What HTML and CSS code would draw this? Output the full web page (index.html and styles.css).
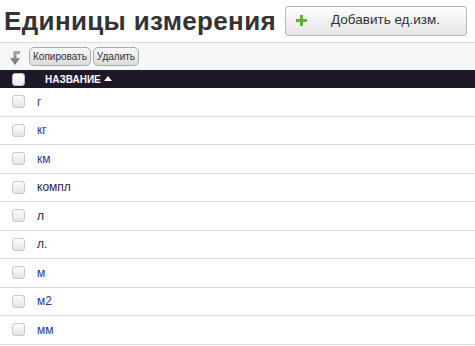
FILE: index.html
```html
<!DOCTYPE html>
<html>
<head>
    <title>Единицы измерения</title>
    <link rel="stylesheet" href="styles.css">
</head>
<body>
    <div class="page-head">
        <h1>Единицы измерения</h1>
        <button class="add-btn">
            <svg class="plus" width="11" height="11" viewBox="0 0 11 11">
                <path d="M4 0h3v4h4v3H7v4H4V7H0V4h4z" fill="#5bb33a"/>
            </svg>
            <span>Добавить ед.изм.</span>
        </button>
    </div>
    <div class="toolbar">
        <svg class="arrow" width="11" height="14" viewBox="0 0 11 14">
            <defs>
                <linearGradient id="ag" x1="0" y1="0" x2="0" y2="1">
                    <stop offset="0" stop-color="#a8a8a8"/>
                    <stop offset="1" stop-color="#6f6f6f"/>
                </linearGradient>
            </defs>
            <path d="M3.5 0H10v3H6.5v4H10L5 14 0 7h3.5z" fill="url(#ag)"/>
        </svg>
        <button class="small-btn">Копировать</button>
        <button class="small-btn">Удалить</button>
    </div>
    <table class="grid">
        <thead>
            <tr>
                <th class="check"><span class="box head-box"></span></th>
                <th class="name">НАЗВАНИЕ <svg class="sort" width="8" height="5" viewBox="0 0 8 5"><path d="M4 0l4 5H0z" fill="#fff"/></svg></th>
            </tr>
        </thead>
        <tbody>
            <tr><td class="check"><span class="box"></span></td><td><a href="#">г</a></td></tr>
            <tr><td class="check"><span class="box"></span></td><td><a href="#">кг</a></td></tr>
            <tr><td class="check"><span class="box"></span></td><td><a href="#">км</a></td></tr>
            <tr><td class="check"><span class="box"></span></td><td><a href="#" class="seen">компл</a></td></tr>
            <tr><td class="check"><span class="box"></span></td><td><a href="#" class="seen">л</a></td></tr>
            <tr><td class="check"><span class="box"></span></td><td><a href="#" class="seen">л.</a></td></tr>
            <tr><td class="check"><span class="box"></span></td><td><a href="#">м</a></td></tr>
            <tr><td class="check"><span class="box"></span></td><td><a href="#">м2</a></td></tr>
            <tr><td class="check"><span class="box"></span></td><td><a href="#">мм</a></td></tr>
        </tbody>
    </table>
</body>
</html>
```

FILE: styles.css
```css
body {
    margin: 0;
    font-family: "Liberation Sans", Arial, sans-serif;
    background-color: #fff;
    color: #333;
}
.page-head {
    display: flex;
    align-items: center;
    height: 42px;
    padding: 0 8px 0 4px;
    border-bottom: 1px solid #dedede;
}
h1 {
    margin: 0;
    font-size: 26px;
    font-weight: bold;
    color: #333;
    letter-spacing: 0.35px;
}
.add-btn {
    display: flex;
    align-items: center;
    margin-left: 9px;
    width: 182px;
    height: 30px;
    padding: 0 0 0 10px;
    border: 1px solid #b8b8b8;
    border-radius: 3px;
    background: linear-gradient(#fdfdfd, #e6e6e6);
    font-family: "Liberation Sans", Arial, sans-serif;
    font-size: 13.5px;
    color: #333;
    cursor: pointer;
}
.add-btn .plus {
    margin-top: -1px;
}
.add-btn span {
    flex: 1;
    text-align: center;
    margin-top: -4px;
    padding-right: 2px;
}
.toolbar {
    display: flex;
    align-items: center;
    height: 27px;
    padding-left: 10px;
    background-color: #f7f7f7;
}
.arrow {
    margin-right: 8px;
    margin-top: 3px;
}
.small-btn {
    height: 19px;
    padding: 0 3px;
    margin-right: 2px;
    border: 1px solid #a9a9a9;
    border-radius: 5px;
    background: linear-gradient(#fafafa, #dcdcdc);
    font-family: "Liberation Sans", Arial, sans-serif;
    font-size: 10px;
    color: #333;
}
.grid {
    width: 100%;
    border-collapse: collapse;
}
.grid thead tr {
    background-color: #1f1829;
}
.grid th {
    height: 18px;
    padding: 0;
    text-align: left;
    color: #fff;
    font-size: 10px;
    font-weight: bold;
}
.grid th.name {
    padding-left: 8px;
}
.sort {
    vertical-align: 2px;
}
.check {
    width: 37px;
    padding: 0 0 0 12px !important;
    box-sizing: border-box;
}
.box {
    display: block;
    width: 11px;
    height: 11px;
    border: 1px solid #c9c9c9;
    border-radius: 3px;
    background: linear-gradient(#fdfdfd, #e4e4e4);
}
.head-box {
    border-color: #bbb;
    background: linear-gradient(#fff, #e8e8e8);
}
.grid td {
    height: 27.5px;
    padding: 0;
    border-bottom: 1px solid #dcdcdc;
    font-size: 12px;
}
.grid td a {
    color: #1a3b8c;
    text-decoration: none;
}
.grid td a.seen {
    color: #2a1f44;
}
```
